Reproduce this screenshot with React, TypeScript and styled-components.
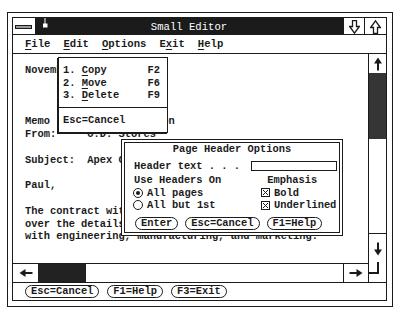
import React from 'react';
import styled, { createGlobalStyle } from 'styled-components';

const INK = '#1b1b1b';
const FONT = '"Liberation Mono", "DejaVu Sans Mono", monospace';

const Global = createGlobalStyle`
  html, body { margin: 0; padding: 0; background: #fff; }
  body { font-family: ${FONT}; color: ${INK}; }
`;

const Page = styled.div`
  width: 400px;
  height: 315px;
  box-sizing: border-box;
  padding: 12px 0 0 7px;
  background: #fff;
`;

const OuterFrame = styled.div`
  width: 386px;
  height: 295px;
  box-sizing: border-box;
  border: 1px solid ${INK};
  padding: 4px 5px 5px 4px;
`;

const Window = styled.div`
  position: relative;
  height: 100%;
  box-sizing: border-box;
  border: 1px solid ${INK};
  display: flex;
  flex-direction: column;
  overflow: hidden;
  font-weight: bold;
`;

/* ---------- title bar ---------- */
const TitleBar = styled.div`
  height: 17px;
  display: flex;
  flex: none;
`;

const SysBox = styled.div`
  width: 22px;
  background: #fff;
  display: flex;
  align-items: center;
  justify-content: center;
`;

const SysBar = styled.div`
  width: 17px;
  height: 4px;
  box-sizing: border-box;
  border: 1px solid ${INK};
  background: #9a9a9a;
  margin-left: -2px;
`;

const TitleArea = styled.div`
  position: relative;
  flex: 1;
  background: ${INK};
  color: #fff;
  display: flex;
  align-items: center;
  justify-content: center;
  font-size: 10.6px;
  font-weight: normal;
`;

const Marker = styled.svg`
  position: absolute;
  left: 8px;
  top: 0;
`;

const TitleButton = styled.div<{ $w: number }>`
  width: ${(p) => p.$w}px;
  border-left: 1px solid ${INK};
  background: #fff;
  display: flex;
  align-items: center;
  justify-content: center;
`;

/* ---------- menu bar ---------- */
const MenuBar = styled.div`
  height: 18px;
  flex: none;
  border-top: 1px solid ${INK};
  border-bottom: 1px solid ${INK};
  display: flex;
  align-items: center;
  padding-left: 12px;
  gap: 13px;
  font-size: 10.6px;
  margin-top: -1px;
`;

const MenuItem = styled.span``;

const U = styled.span`
  text-decoration: underline;
  text-underline-offset: 2px;
  text-decoration-thickness: 1px;
`;

/* ---------- middle ---------- */
const Middle = styled.div`
  height: 210px;
  flex: none;
  display: flex;
`;

const TextArea = styled.div`
  flex: 1;
  border-bottom: 1px solid ${INK};
  padding: 10px 0 0 12px;
  font-size: 10.4px;
  line-height: 12.8px;
  white-space: pre;
  overflow: hidden;
`;

const VScroll = styled.div`
  width: 17px;
  border-left: 1px solid ${INK};
  display: flex;
  flex-direction: column;
`;

const ArrowCell = styled.div<{ $h: number; $top?: boolean }>`
  height: ${(p) => p.$h}px;
  flex: none;
  display: flex;
  align-items: center;
  justify-content: center;
  border-top: ${(p) => (p.$top ? `1px solid ${INK}` : 'none')};
`;

const VThumb = styled.div`
  height: 66px;
  flex: none;
  background: #353535;
`;

const Track = styled.div`
  flex: 1;
`;

/* ---------- horizontal scroll ---------- */
const HScroll = styled.div`
  height: 18px;
  flex: none;
  border-bottom: 1px solid ${INK};
  display: flex;
`;

const HCell = styled.div<{ $w: number; $left?: boolean }>`
  width: ${(p) => p.$w}px;
  flex: none;
  display: flex;
  align-items: center;
  justify-content: center;
  border-left: ${(p) => (p.$left ? `1px solid ${INK}` : 'none')};
`;

const HThumb = styled.div`
  width: 48px;
  flex: none;
  background: #222;
`;

const Corner = styled.div`
  width: 17px;
  flex: none;
  border-left: 1px solid ${INK};
`;

const CornerMark = styled.svg`
  display: block;
  overflow: visible;
`;

/* ---------- key bar ---------- */
const KeyBar = styled.div`
  flex: 1;
  display: flex;
  align-items: center;
  padding-left: 12px;
  gap: 8px;
`;

const Pill = styled.span`
  display: inline-flex;
  align-items: center;
  height: 13px;
  box-sizing: border-box;
  padding: 0 5px;
  border: 1px solid ${INK};
  border-radius: 7px;
  font-size: 10.4px;
  line-height: 11px;
  white-space: pre;
`;

/* ---------- pull-down menu ---------- */
const PullDown = styled.div`
  position: absolute;
  left: 45px;
  top: 39px;
  width: 110px;
  height: 76px;
  box-sizing: border-box;
  background: #fff;
  border: 1px solid ${INK};
  box-shadow: -1px 1px 0 ${INK};
  padding-top: 6px;
  font-size: 10.4px;
  line-height: 12.5px;
  white-space: pre;
`;

const PullItem = styled.div`
  display: flex;
  justify-content: space-between;
  padding: 0 7px 0 4px;
`;

const PullSep = styled.div`
  border-top: 1px solid ${INK};
  margin: 5px 0 6px;
`;

/* ---------- dialog ---------- */
const Dialog = styled.div`
  position: absolute;
  left: 108px;
  top: 121px;
  width: 222px;
  height: 97px;
  box-sizing: border-box;
  background: #fff;
  border: 1px solid ${INK};
  padding: 2px;
`;

const DialogInner = styled.div`
  height: 100%;
  box-sizing: border-box;
  border: 1px solid ${INK};
  font-size: 10.4px;
  display: flex;
  flex-direction: column;
`;

const DialogTitle = styled.div`
  text-align: center;
  line-height: 12px;
`;

const FieldRow = styled.div`
  margin-top: 5px;
  padding-left: 9px;
  display: flex;
  align-items: center;
  line-height: 12px;
  white-space: pre;
`;

const TextField = styled.div`
  width: 86px;
  height: 10px;
  box-sizing: border-box;
  border: 1px solid ${INK};
  margin-left: auto;
  margin-right: 2px;
`;

const OptionGrid = styled.div`
  margin-top: 2px;
  padding-left: 9px;
  display: grid;
  grid-template-columns: 127px 1fr;
  grid-auto-rows: 12.5px;
  align-items: center;
  white-space: pre;
`;

const Choice = styled.div<{ $shift?: number }>`
  display: flex;
  align-items: center;
  gap: 4px;
  margin-left: ${(p) => p.$shift ?? 0}px;
`;

const Radio = styled.span<{ $on?: boolean }>`
  width: 10px;
  height: 10px;
  box-sizing: border-box;
  border: 1px solid ${INK};
  border-radius: 50%;
  display: inline-flex;
  align-items: center;
  justify-content: center;
  &::after {
    content: '';
    width: 4px;
    height: 4px;
    border-radius: 50%;
    background: ${(p) => (p.$on ? INK : 'transparent')};
  }
`;

const ButtonRow = styled.div`
  margin-top: 5.5px;
  padding-left: 10px;
  display: flex;
  gap: 7px;
`;

/* ---------- icons ---------- */
const HollowArrow = ({ up }: { up?: boolean }) => (
  <svg width="11" height="14" viewBox="0 0 11 14" style={{ transform: up ? 'rotate(180deg)' : undefined }}>
    <polygon
      points="3.5,0.7 7.5,0.7 7.5,6.5 10.3,6.5 5.5,13.2 0.7,6.5 3.5,6.5"
      fill="#fff"
      stroke={INK}
      strokeWidth="1.3"
    />
  </svg>
);

const SolidArrow = ({ dir }: { dir: 'up' | 'down' | 'left' | 'right' }) => {
  const rot = { up: 0, down: 180, left: -90, right: 90 }[dir];
  return (
    <svg width="14" height="14" viewBox="0 0 14 14" style={{ transform: `rotate(${rot}deg)` }}>
      <polygon points="7,0.5 11,6.5 8,6.5 8,13.5 6,13.5 6,6.5 3,6.5" fill={INK} />
    </svg>
  );
};

const CheckBox = () => (
  <svg width="9" height="9" viewBox="0 0 9 9">
    <rect x="0.5" y="0.5" width="8" height="8" fill="#fff" stroke={INK} strokeWidth="1" />
    <path d="M2 2 L7 7 M7 2 L2 7" stroke={INK} strokeWidth="1" />
  </svg>
);

const bodyText = [
  'November 14, 1988',
  '',
  '',
  '',
  'Memo     To: Pat Johnson',
  'From:     O.D. Stores',
  '',
  'Subject:  Apex Contract',
  '',
  'Paul,',
  '',
  'The contract with Apex is signed. Please',
  'over the details of the schedule',
  'with engineering, manufacturing, and marketing.',
].join('\n');

export default function App() {
  return (
    <Page>
      <Global />
      <OuterFrame>
        <Window>
          <TitleBar>
            <SysBox>
              <SysBar />
            </SysBox>
            <TitleArea>
              <Marker width="6" height="11" viewBox="0 0 6 11">
                <line x1="2" y1="0" x2="2" y2="6" stroke="#fff" strokeWidth="1" />
                <rect x="0" y="5.5" width="4.5" height="4" fill="#fff" />
              </Marker>
              Small Editor
            </TitleArea>
            <TitleButton $w={20}>
              <HollowArrow />
            </TitleButton>
            <TitleButton $w={21}>
              <HollowArrow up />
            </TitleButton>
          </TitleBar>

          <MenuBar>
            <MenuItem>
              <U>F</U>ile
            </MenuItem>
            <MenuItem>
              <U>E</U>dit
            </MenuItem>
            <MenuItem>
              <U>O</U>ptions
            </MenuItem>
            <MenuItem>
              E<U>x</U>it
            </MenuItem>
            <MenuItem>
              <U>H</U>elp
            </MenuItem>
          </MenuBar>

          <Middle>
            <TextArea>{bodyText}</TextArea>
            <VScroll>
              <ArrowCell $h={19}>
                <SolidArrow dir="up" />
              </ArrowCell>
              <VThumb />
              <Track />
              <ArrowCell $h={30} $top>
                <SolidArrow dir="down" />
              </ArrowCell>
            </VScroll>
          </Middle>

          <HScroll>
            <HCell $w={25}>
              <SolidArrow dir="left" />
            </HCell>
            <HThumb />
            <Track />
            <HCell $w={24} $left>
              <SolidArrow dir="right" />
            </HCell>
            <Corner>
              <CornerMark width="17" height="18" viewBox="0 0 17 18">
                <path d="M9 -2 V9 H0" fill="none" stroke={INK} strokeWidth="2" />
              </CornerMark>
            </Corner>
          </HScroll>

          <KeyBar>
            <Pill>Esc=Cancel</Pill>
            <Pill>F1=Help</Pill>
            <Pill>F3=Exit</Pill>
          </KeyBar>

          <PullDown>
            <PullItem>
              <span>
                1. <U>C</U>opy
              </span>
              <span>F2</span>
            </PullItem>
            <PullItem>
              <span>
                2. <U>M</U>ove
              </span>
              <span>F6</span>
            </PullItem>
            <PullItem>
              <span>
                3. <U>D</U>elete
              </span>
              <span>F9</span>
            </PullItem>
            <PullSep />
            <PullItem>
              <span>Esc=Cancel</span>
            </PullItem>
          </PullDown>

          <Dialog>
            <DialogInner>
              <DialogTitle>Page Header Options</DialogTitle>
              <FieldRow>
                Header text . . .
                <TextField />
              </FieldRow>
              <OptionGrid>
                <span>Use Headers On</span>
                <span> Emphasis</span>
                <Choice $shift={-1}>
                  <Radio $on />
                  All pages
                </Choice>
                <Choice>
                  <CheckBox />
                  Bold
                </Choice>
                <Choice $shift={-1}>
                  <Radio />
                  All but 1st
                </Choice>
                <Choice>
                  <CheckBox />
                  Underlined
                </Choice>
              </OptionGrid>
              <ButtonRow>
                <Pill>Enter</Pill>
                <Pill>Esc=Cancel</Pill>
                <Pill>F1=Help</Pill>
              </ButtonRow>
            </DialogInner>
          </Dialog>
        </Window>
      </OuterFrame>
    </Page>
  );
}
